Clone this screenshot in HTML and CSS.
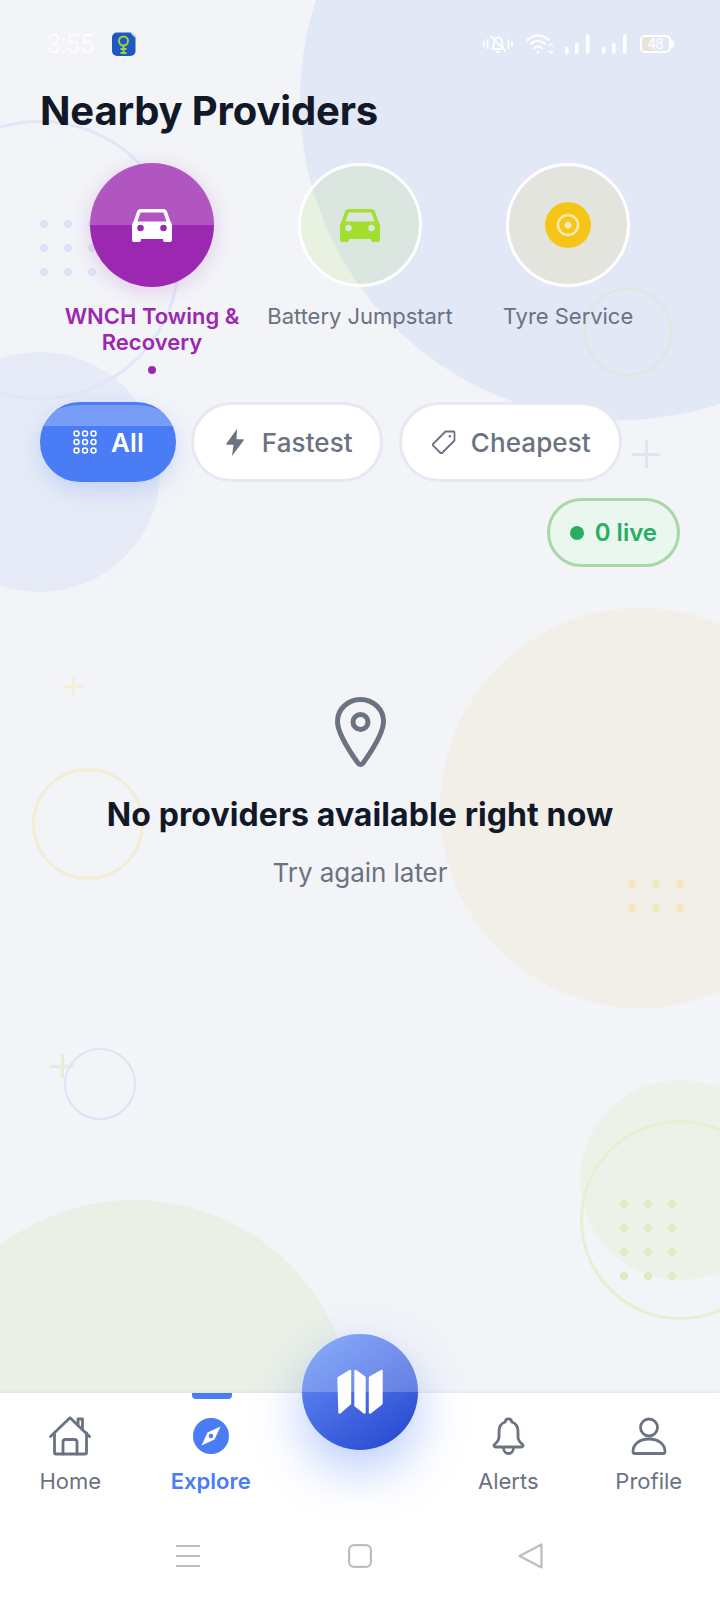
FILE: index.html
```html
<!DOCTYPE html>
<html lang="en">
<head>
    <meta charset="UTF-8">
    <meta name="viewport" content="width=device-width, initial-scale=1.0">
    <title>Nearby Providers</title>
    <link rel="stylesheet" href="styles.css">
</head>
<body>
    <div class="screen">
        <!-- background decoration -->
        <div class="decor">
            <span class="shape blob-blue"></span>
            <span class="shape blob-left"></span>
            <span class="shape ring-left"></span>
            <span class="shape dots-blue"></span>
            <span class="shape ring-tyre"></span>
            <span class="shape plus plus-blue"></span>
            <span class="shape plus plus-yellow"></span>
            <span class="shape blob-beige"></span>
            <span class="shape ring-beige"></span>
            <span class="shape dots-yellow"></span>
            <span class="shape plus plus-green"></span>
            <span class="shape ring-small"></span>
            <span class="shape blob-green"></span>
            <span class="shape ring-green"></span>
            <span class="shape dots-green"></span>
            <span class="shape blob-bottom"></span>
        </div>

        <div class="status-bar">
            <div class="status-left">
                <span class="time">3:55</span>
                <svg class="app-icon" width="24" height="24" viewBox="0 0 24 24">
                    <rect x="0" y="0.5" width="23.500" height="23.500" rx="5" fill="#1f57c3"/>
                    <path d="M19 0.500l4.500 4.500M21 0.500l2.500 2.500" stroke="#dbe6f7" stroke-width="1.200"/>
                    <circle cx="11.500" cy="9" r="4.500" fill="none" stroke="#9ed23c" stroke-width="2"/>
                    <path d="M11.500 13v8M8.500 17h6M8.500 21h6" fill="none" stroke="#9ed23c" stroke-width="2"/>
                </svg>
            </div>
            <div class="status-right">
                <svg class="bell-off" width="30" height="20" viewBox="0 0 30 20" fill="none" stroke="#fff" stroke-width="1.800" stroke-linecap="round" stroke-linejoin="round">
                    <path d="M1 8v4M4.500 6v8M25.500 6v8M29 8v4"/>
                    <path d="M9 15h12c-1.500-1.500-2-3-2-5V8c0-2.500-1.800-4.500-4-4.500S11 5.500 11 8v2c0 2-.5 3.500-2 5zM13.500 18h3M8 2l14 15"/>
                </svg>
                <svg width="27" height="22" viewBox="0 0 27 22" fill="none" stroke="#fff" stroke-width="2.200" stroke-linecap="round">
                    <path d="M1.500 7c6-6 15-6 21 0M5 11c4-4 10-4 14 0M8.500 15c2-2 5-2 7 0"/>
                    <circle cx="12" cy="19" r="1.500" fill="#fff" stroke="none"/>
                    <path d="M23 13l2-2 2 2M23 18l2 2 2-2" stroke-width="1.300"/>
                </svg>
                <svg width="26" height="20" viewBox="0 0 26 20" fill="#fff">
                    <rect x="1" y="13" width="3.500" height="7" rx="1.500"/>
                    <rect x="11" y="9" width="3.500" height="11" rx="1.500"/>
                    <rect x="22" y="0" width="3.500" height="20" rx="1.500"/>
                </svg>
                <svg width="26" height="20" viewBox="0 0 26 20" fill="#fff">
                    <rect x="1" y="13" width="3.500" height="7" rx="1.500"/>
                    <rect x="11" y="9" width="3.500" height="11" rx="1.500"/>
                    <rect x="22" y="0" width="3.500" height="20" rx="1.500"/>
                </svg>
                <div class="battery"><span class="battery-level">48</span></div>
            </div>
        </div>

        <h1 class="page-title">Nearby Providers</h1>

        <div class="categories">
            <div class="category active">
                <div class="category-circle">
                    <svg width="40" height="33" viewBox="0 0 40 33" fill="#fff" fill-rule="evenodd">
                        <path d="M9 0H31C33 0 34.500 1 35 2.500L38.500 12.500C39.500 14 40 15 40 17V31C40 32.200 39.200 33 38 33H33C31.800 33 31 32.200 31 31V30H9V31C9 32.200 8.200 33 7 33H2C.8 33 0 32.200 0 31V17C0 15 .5 14 1.500 12.500L5 2.500C5.500 1 7 0 9 0ZM8.500 3.500L5.500 12.500H34.500L31.500 3.500ZM8.500 15.700a3.300 3.300 0 1 0 0 6.600a3.300 3.300 0 1 0 0-6.600ZM31.500 15.700a3.300 3.300 0 1 0 0 6.600a3.300 3.300 0 1 0 0-6.600Z"/>
                    </svg>
                </div>
                <div class="category-label">WNCH Towing &amp; Recovery</div>
                <span class="category-dot"></span>
            </div>
            <div class="category battery-cat">
                <div class="category-circle">
                    <svg width="40" height="33" viewBox="0 0 40 33" fill="#a4de2e" fill-rule="evenodd">
                        <path d="M9 0H31C33 0 34.500 1 35 2.500L38.500 12.500C39.500 14 40 15 40 17V31C40 32.200 39.200 33 38 33H33C31.800 33 31 32.200 31 31V30H9V31C9 32.200 8.200 33 7 33H2C.8 33 0 32.200 0 31V17C0 15 .5 14 1.500 12.500L5 2.500C5.500 1 7 0 9 0ZM8.500 3.500L5.500 12.500H34.500L31.500 3.500ZM8.500 15.700a3.300 3.300 0 1 0 0 6.600a3.300 3.300 0 1 0 0-6.600ZM31.500 15.700a3.300 3.300 0 1 0 0 6.600a3.300 3.300 0 1 0 0-6.600Z"/>
                    </svg>
                </div>
                <div class="category-label">Battery Jumpstart</div>
            </div>
            <div class="category tyre-cat">
                <div class="category-circle">
                    <svg width="46" height="46" viewBox="0 0 46 46">
                        <circle cx="23" cy="23" r="23" fill="#f5c518"/>
                        <circle cx="23" cy="23" r="10" fill="none" stroke="#f7e8ad" stroke-width="2.600"/>
                        <circle cx="23" cy="23" r="3.400" fill="#f7e8ad"/>
                    </svg>
                </div>
                <div class="category-label">Tyre Service</div>
            </div>
        </div>

        <div class="filters">
            <button class="chip chip-active">
                <svg width="24" height="24" viewBox="0 0 24 24" fill="none" stroke="#fff" stroke-width="1.500">
                    <circle cx="3.500" cy="3.500" r="2.500"/><circle cx="12" cy="3.500" r="2.500"/><circle cx="20.500" cy="3.500" r="2.500"/>
                    <circle cx="3.500" cy="12" r="2.500"/><circle cx="12" cy="12" r="2.500"/><circle cx="20.500" cy="12" r="2.500"/>
                    <circle cx="3.500" cy="20.500" r="2.500"/><circle cx="12" cy="20.500" r="2.500"/><circle cx="20.500" cy="20.500" r="2.500"/>
                </svg>
                All
            </button>
            <button class="chip chip-fast">
                <svg width="20" height="27" viewBox="0 0 19 27" fill="#6b7280">
                    <path d="M11.500 0L.900 14.500c-.4.6 0 1.200.7 1.200H8L6.500 27 18.100 11.500c.4-.6 0-1.200-.7-1.200H11z"/>
                </svg>
                Fastest
            </button>
            <button class="chip">
                <svg width="24" height="24" viewBox="0 0 24 24" fill="none" stroke="#6b7280" stroke-width="1.800" stroke-linejoin="round">
                    <path d="M13.500 1.500H21.500a1 1 0 0 1 1 1V10.500L10 23a1 1 0 0 1-1.400 0L1 15.400a1 1 0 0 1 0-1.400z"/>
                    <circle cx="17.800" cy="6.200" r="1.200" fill="#6b7280" stroke="none"/>
                </svg>
                Cheapest
            </button>
        </div>

        <div class="live-row">
            <div class="live-pill"><span class="live-dot"></span>0 live</div>
        </div>

        <main class="empty">
            <svg width="51" height="70" viewBox="0 0 51 70" fill="none" stroke="#6b7280" stroke-width="5">
                <path d="M25.500 2.500C12.800 2.500 2.500 12.300 2.500 24.400c0 11.600 13.400 31.700 20.500 41.700a3 3 0 0 0 5 0c7.100-10 20.500-30.100 20.500-41.700C48.500 12.300 38.200 2.500 25.500 2.500z" stroke-linejoin="round"/>
                <circle cx="25.500" cy="25" r="7.500"/>
            </svg>
            <h2 class="empty-title">No providers available right now</h2>
            <p class="empty-text">Try again later</p>
        </main>

        <nav class="bottom-nav">
            <div class="nav-items">
                <div class="nav-item">
                    <svg width="42" height="40" viewBox="0 0 42 40" fill="none" stroke="#6b7280" stroke-width="2.800" stroke-linecap="round" stroke-linejoin="round">
                        <path d="M1.500 20.500L21 1.800l19.500 18.700M29 9V3h4.500v10.500"/>
                        <path d="M5.500 17v20a1 1 0 0 0 1 1H36.500a1 1 0 0 0 1-1V17"/>
                        <path d="M14 38V26a2.500 2.500 0 0 1 2.500-2.500h9A2.500 2.500 0 0 1 28 26v12"/>
                    </svg>
                    <span class="nav-label">Home</span>
                </div>
                <div class="nav-item current">
                    <span class="nav-indicator"></span>
                    <svg width="36" height="36" viewBox="0 0 36 36">
                        <circle cx="18" cy="18" r="18" fill="#4a7cf5"/>
                        <path d="M27.500 8.500L21.500 21.500 8.500 27.500 14.500 14.500z" fill="#fff"/>
                        <circle cx="18" cy="18" r="2.200" fill="#4a7cf5"/>
                    </svg>
                    <span class="nav-label">Explore</span>
                </div>
                <div class="nav-center">
                    <button class="fab">
                        <svg width="46" height="46" viewBox="0 0 46 46" fill="#fff" stroke="#fff" stroke-width="2.400" stroke-linejoin="round">
                            <path d="M1.500 9L13 2V34.500L2.500 43.500z"/>
                            <path d="M18.500 2L27.500 8.500V43.500L18.500 36.500z"/>
                            <path d="M33 8.500L44.500 2V34.500L33 43.500z"/>
                        </svg>
                    </button>
                </div>
                <div class="nav-item">
                    <svg width="33" height="38" viewBox="0 0 33 38" fill="none" stroke="#6b7280" stroke-width="2.800" stroke-linejoin="round">
                        <path d="M16.500 1.800c2 0 3.200 1.500 3.200 3.200 4.800 1.300 6.300 5.500 6.300 10v5c0 3 1.500 5 4.500 7.500 1 1 .5 2.500-1 2.500H3.500c-1.500 0-2-1.500-1-2.500C5.500 25 7 23 7 20v-5c0-4.500 1.500-8.700 6.300-10 0-1.700 1.200-3.200 3.200-3.200z"/>
                        <path d="M11.500 30.500c0 3.500 2.200 6 5 6s5-2.500 5-6"/>
                    </svg>
                    <span class="nav-label">Alerts</span>
                </div>
                <div class="nav-item">
                    <svg width="36" height="38" viewBox="0 0 36 38" fill="none" stroke="#6b7280" stroke-width="2.800" stroke-linejoin="round">
                        <circle cx="18" cy="10.500" r="8.500"/>
                        <path d="M2 34.500c0-7.500 7-12.500 16-12.500s16 5 16 12.500c0 1-.6 2-1.800 2H3.800c-1.200 0-1.800-1-1.800-2z"/>
                    </svg>
                    <span class="nav-label">Profile</span>
                </div>
            </div>
            <div class="system-nav">
                <svg width="24" height="22" viewBox="0 0 24 22" stroke="#bdbdbd" stroke-width="2">
                    <path d="M0 1h24M0 11h24M0 21h24"/>
                </svg>
                <svg width="24" height="24" viewBox="0 0 24 24" fill="none" stroke="#bdbdbd" stroke-width="2.200">
                    <rect x="1.100" y="1.100" width="21.800" height="21.800" rx="5"/>
                </svg>
                <svg class="back-key" width="25" height="26" viewBox="0 0 25 26" fill="none" stroke="#bdbdbd" stroke-width="2.200" stroke-linejoin="round">
                    <path d="M23.500 1.500V24.500L1.500 13z"/>
                </svg>
            </div>
        </nav>
    </div>
</body>
</html>
```

FILE: styles.css
```css
/* Global Styles */
* {
    box-sizing: border-box;
}

body {
    font-family: 'Inter', 'Noto Sans', sans-serif;
    margin: 0;
    padding: 0;
    background-color: #f2f4f8;
    color: #111827;
}

.screen {
    position: relative;
    width: 720px;
    height: 1600px;
    overflow: hidden;
    display: flex;
    flex-direction: column;
    background-color: #f2f4f8;
}

.screen > * {
    position: relative;
}

/* Background decoration */
.screen > .decor {
    position: absolute;
    inset: 0;
}

.shape {
    position: absolute;
    display: block;
    border-radius: 50%;
}

.blob-blue {
    left: 300px;
    top: -220px;
    width: 640px;
    height: 640px;
    background: #e2e8f6;
}

.blob-left {
    left: -80px;
    top: 352px;
    width: 240px;
    height: 240px;
    background: #e6ebf7;
}

.ring-left {
    left: -100px;
    top: 120px;
    width: 280px;
    height: 280px;
    border: 3px solid #e0e7f6;
}

.dots-blue {
    left: 40px;
    top: 220px;
    width: 72px;
    height: 72px;
    border-radius: 0;
    background: radial-gradient(circle 4px at 4px 4px, #dbe4f6 96%, transparent) 0 0 / 24px 24px;
}

.ring-tyre {
    left: 584px;
    top: 288px;
    width: 88px;
    height: 88px;
    border: 2px solid #dce8dd;
}

.plus {
    border-radius: 0;
}

.plus::before,
.plus::after {
    content: "";
    position: absolute;
    background-color: currentColor;
}

.plus::before {
    left: 0;
    right: 0;
    top: calc(50% - 1.5px);
    height: 3px;
}

.plus::after {
    top: 0;
    bottom: 0;
    left: calc(50% - 1.5px);
    width: 3px;
}

.plus-blue {
    left: 632px;
    top: 440px;
    width: 28px;
    height: 28px;
    color: #dde5f6;
}

.plus-yellow {
    left: 63px;
    top: 676px;
    width: 21px;
    height: 20px;
    color: #f3efd8;
}

.plus-green {
    left: 50px;
    top: 1054px;
    width: 24px;
    height: 24px;
    color: #e3efd6;
}

.blob-beige {
    left: 440px;
    top: 608px;
    width: 400px;
    height: 400px;
    background: #f1efe7;
}

.ring-beige {
    left: 32px;
    top: 768px;
    width: 112px;
    height: 112px;
    border: 3px solid #f4edd3;
}

.dots-yellow {
    left: 628px;
    top: 880px;
    width: 56px;
    height: 32px;
    border-radius: 0;
    background: radial-gradient(circle 4px at 4px 4px, #f3e8bf 96%, transparent) 0 0 / 24px 24px;
}

.ring-small {
    left: 64px;
    top: 1048px;
    width: 72px;
    height: 72px;
    border: 2px solid #dde4f6;
}

.blob-green {
    left: 580px;
    top: 1080px;
    width: 200px;
    height: 200px;
    background: #edf2e8;
}

.ring-green {
    left: 580px;
    top: 1120px;
    width: 200px;
    height: 200px;
    border: 3px solid #e5f0d3;
}

.dots-green {
    left: 620px;
    top: 1200px;
    width: 56px;
    height: 80px;
    border-radius: 0;
    background: radial-gradient(circle 4px at 4px 4px, #deecc5 96%, transparent) 0 0 / 24px 24px;
}

.blob-bottom {
    left: -86px;
    top: 1200px;
    width: 440px;
    height: 440px;
    background: #eaf0e6;
}

/* Status bar */
.status-bar {
    display: flex;
    justify-content: space-between;
    align-items: center;
    height: 88px;
    padding: 0 46px 0 47px;
}

.status-left {
    display: flex;
    align-items: center;
    gap: 18px;
}

.time {
    font-family: 'Roboto', sans-serif;
    font-weight: 300;
    font-size: 25px;
    color: #ffffff;
}

.status-right {
    display: flex;
    align-items: center;
    gap: 11px;
}

.bell-off {
    margin-right: 2px;
}

.battery {
    position: relative;
    width: 31px;
    height: 18px;
    margin: 0 3px 0 2px;
    border: 2px solid #ffffff;
    border-radius: 5px;
    background: linear-gradient(90deg, #e9e4d9 45%, transparent 45%);
}

.battery::after {
    content: "";
    position: absolute;
    right: -5px;
    top: 3px;
    width: 3px;
    height: 8px;
    border-radius: 0 3px 3px 0;
    background: #ffffff;
}

.battery-level {
    display: block;
    text-align: center;
    font-family: 'Roboto', sans-serif;
    font-size: 14px;
    line-height: 14px;
    color: #ffffff;
}

/* Title */
.page-title {
    margin: -1px 0 0;
    padding-left: 40px;
    font-size: 40px;
    line-height: 48px;
    font-weight: 700;
    color: #111827;
    letter-spacing: -0.15px;
}

/* Categories */
.categories {
    display: flex;
    padding: 28px 48px 0;
}

.category {
    width: 208px;
    display: flex;
    flex-direction: column;
    align-items: center;
}

.category-circle {
    width: 124px;
    height: 124px;
    border-radius: 50%;
    border: 3px solid #ffffff;
    display: flex;
    align-items: center;
    justify-content: center;
    margin-bottom: 16px;
}

.battery-cat .category-circle {
    background: rgba(164, 222, 46, 0.11);
}

.tyre-cat .category-circle {
    background: rgba(245, 197, 24, 0.1);
}

.category.active {
    position: relative;
}

.category.active .category-circle {
    position: relative;
    overflow: hidden;
    border: none;
    background: #9c27b0;
}

/* glow sits on a sibling layer, the circle itself clips the highlight */
.category.active::before {
    content: "";
    position: absolute;
    left: 42px;
    top: 0;
    width: 124px;
    height: 124px;
    border-radius: 50%;
    box-shadow: 0 4px 20px rgba(156, 39, 176, 0.2);
}

.category.active .category-circle::before {
    content: "";
    position: absolute;
    left: 0;
    right: 0;
    top: 0;
    height: 50%;
    background: rgba(255, 255, 255, 0.22);
}

.category.active .category-circle svg {
    position: relative;
}

.category-label {
    font-size: 22px;
    line-height: 26px;
    text-align: center;
    color: #6b7280;
    padding: 0 8px;
}

.category.active .category-label {
    font-weight: 600;
    color: #9c27b0;
    padding: 0 14px;
}

.category-dot {
    width: 8px;
    height: 8px;
    margin-top: 11px;
    border-radius: 50%;
    background: #9c27b0;
}

.tyre-cat .category-label,
.battery-cat .category-label {
    white-space: nowrap;
    letter-spacing: -0.03px;
}

/* Filter chips */
.filters {
    display: flex;
    gap: 15px;
    padding: 28px 40px 0;
}

.chip {
    position: relative;
    overflow: hidden;
    height: 80px;
    display: flex;
    align-items: center;
    gap: 15px;
    padding: 0 28px 0 30px;
    font-family: inherit;
    font-size: 26px;
    font-weight: 500;
    letter-spacing: 0.1px;
    color: #6b7280;
    background: #ffffff;
    border: 3px solid #e6e9f1;
    border-radius: 40px;
}

.chip-fast {
    gap: 17px;
    margin-right: 1px;
    padding: 0 27px 0 31px;
}

.chip-active {
    gap: 14px;
    padding-right: 29px;
    color: #ffffff;
    font-weight: 600;
    background: #4a7cf5;
    border-color: #4a7cf5;
    overflow: visible;
    box-shadow: 0 8px 22px rgba(74, 124, 245, 0.22);
}

.chip-active::before {
    content: "";
    position: absolute;
    left: 0;
    right: 0;
    top: 0;
    height: 21px;
    border-radius: 37px 37px 0 0 / 21px 21px 0 0;
    background: rgba(255, 255, 255, 0.25);
}

/* Live badge */
.live-row {
    display: flex;
    justify-content: flex-end;
    padding: 16px 40px 0;
}

.live-pill {
    height: 69px;
    display: flex;
    align-items: center;
    gap: 11px;
    padding: 0 20px 0 20px;
    font-size: 24px;
    font-weight: 600;
    color: #27ae60;
    background: #e9f7ee;
    border: 3px solid #abd6a9;
    border-radius: 35px;
}

.live-dot {
    width: 14px;
    height: 14px;
    border-radius: 50%;
    background: #27ae60;
}

/* Empty state */
.empty {
    flex: 1;
    display: flex;
    flex-direction: column;
    align-items: center;
    padding-top: 130px;
}

.empty-title {
    margin: 28px 0 0;
    font-size: 32px;
    line-height: 40px;
    font-weight: 700;
    letter-spacing: 0.1px;
    color: #111827;
}

.empty-text {
    margin: 22px 0 0;
    font-size: 26px;
    line-height: 32px;
    letter-spacing: -0.05px;
    color: #6b7280;
}

/* Bottom navigation */
.bottom-nav {
    height: 207px;
    background: #ffffff;
    box-shadow: 0 -1px 3px rgba(17, 24, 39, 0.06);
}

.nav-items {
    display: flex;
    align-items: flex-start;
    height: 147px;
}

.nav-item {
    position: relative;
    width: 140.5px;
    height: 100%;
    padding-top: 23px;
    display: flex;
    flex-direction: column;
    align-items: center;
}

.nav-item svg {
    height: 40px;
    display: block;
}

.nav-label {
    margin-top: 12px;
    font-size: 22px;
    line-height: 26px;
    color: #6b7280;
}

.nav-item.current .nav-label {
    font-weight: 600;
    color: #4a7cf5;
}

.nav-indicator {
    position: absolute;
    top: 0;
    left: 50%;
    width: 40px;
    height: 6px;
    margin-left: -19px;
    border-radius: 0 0 4px 4px;
    background: #4a7cf5;
}

.nav-center {
    position: relative;
    width: 158px;
    margin-right: -1px;
    display: flex;
    justify-content: center;
}

.nav-center::before {
    content: "";
    position: absolute;
    left: 21px;
    top: -59px;
    width: 116px;
    height: 116px;
    border-radius: 50%;
    box-shadow: 0 20px 50px rgba(74, 124, 245, 0.4);
}

.fab {
    position: relative;
    overflow: hidden;
    width: 116px;
    height: 116px;
    margin-top: -59px;
    padding: 0;
    border: none;
    border-radius: 50%;
    display: flex;
    align-items: center;
    justify-content: center;
    background: linear-gradient(145deg, #6a96fb, #2342cd);
}

.fab::before {
    content: "";
    position: absolute;
    left: 0;
    right: 0;
    top: 0;
    height: 50%;
    background: rgba(255, 255, 255, 0.22);
}

.fab svg {
    position: relative;
}

.system-nav {
    display: flex;
    justify-content: center;
    align-items: center;
    gap: 148px;
    height: 32px;
    padding-right: 1px;
}

.back-key {
    margin-left: -2px;
}
```
